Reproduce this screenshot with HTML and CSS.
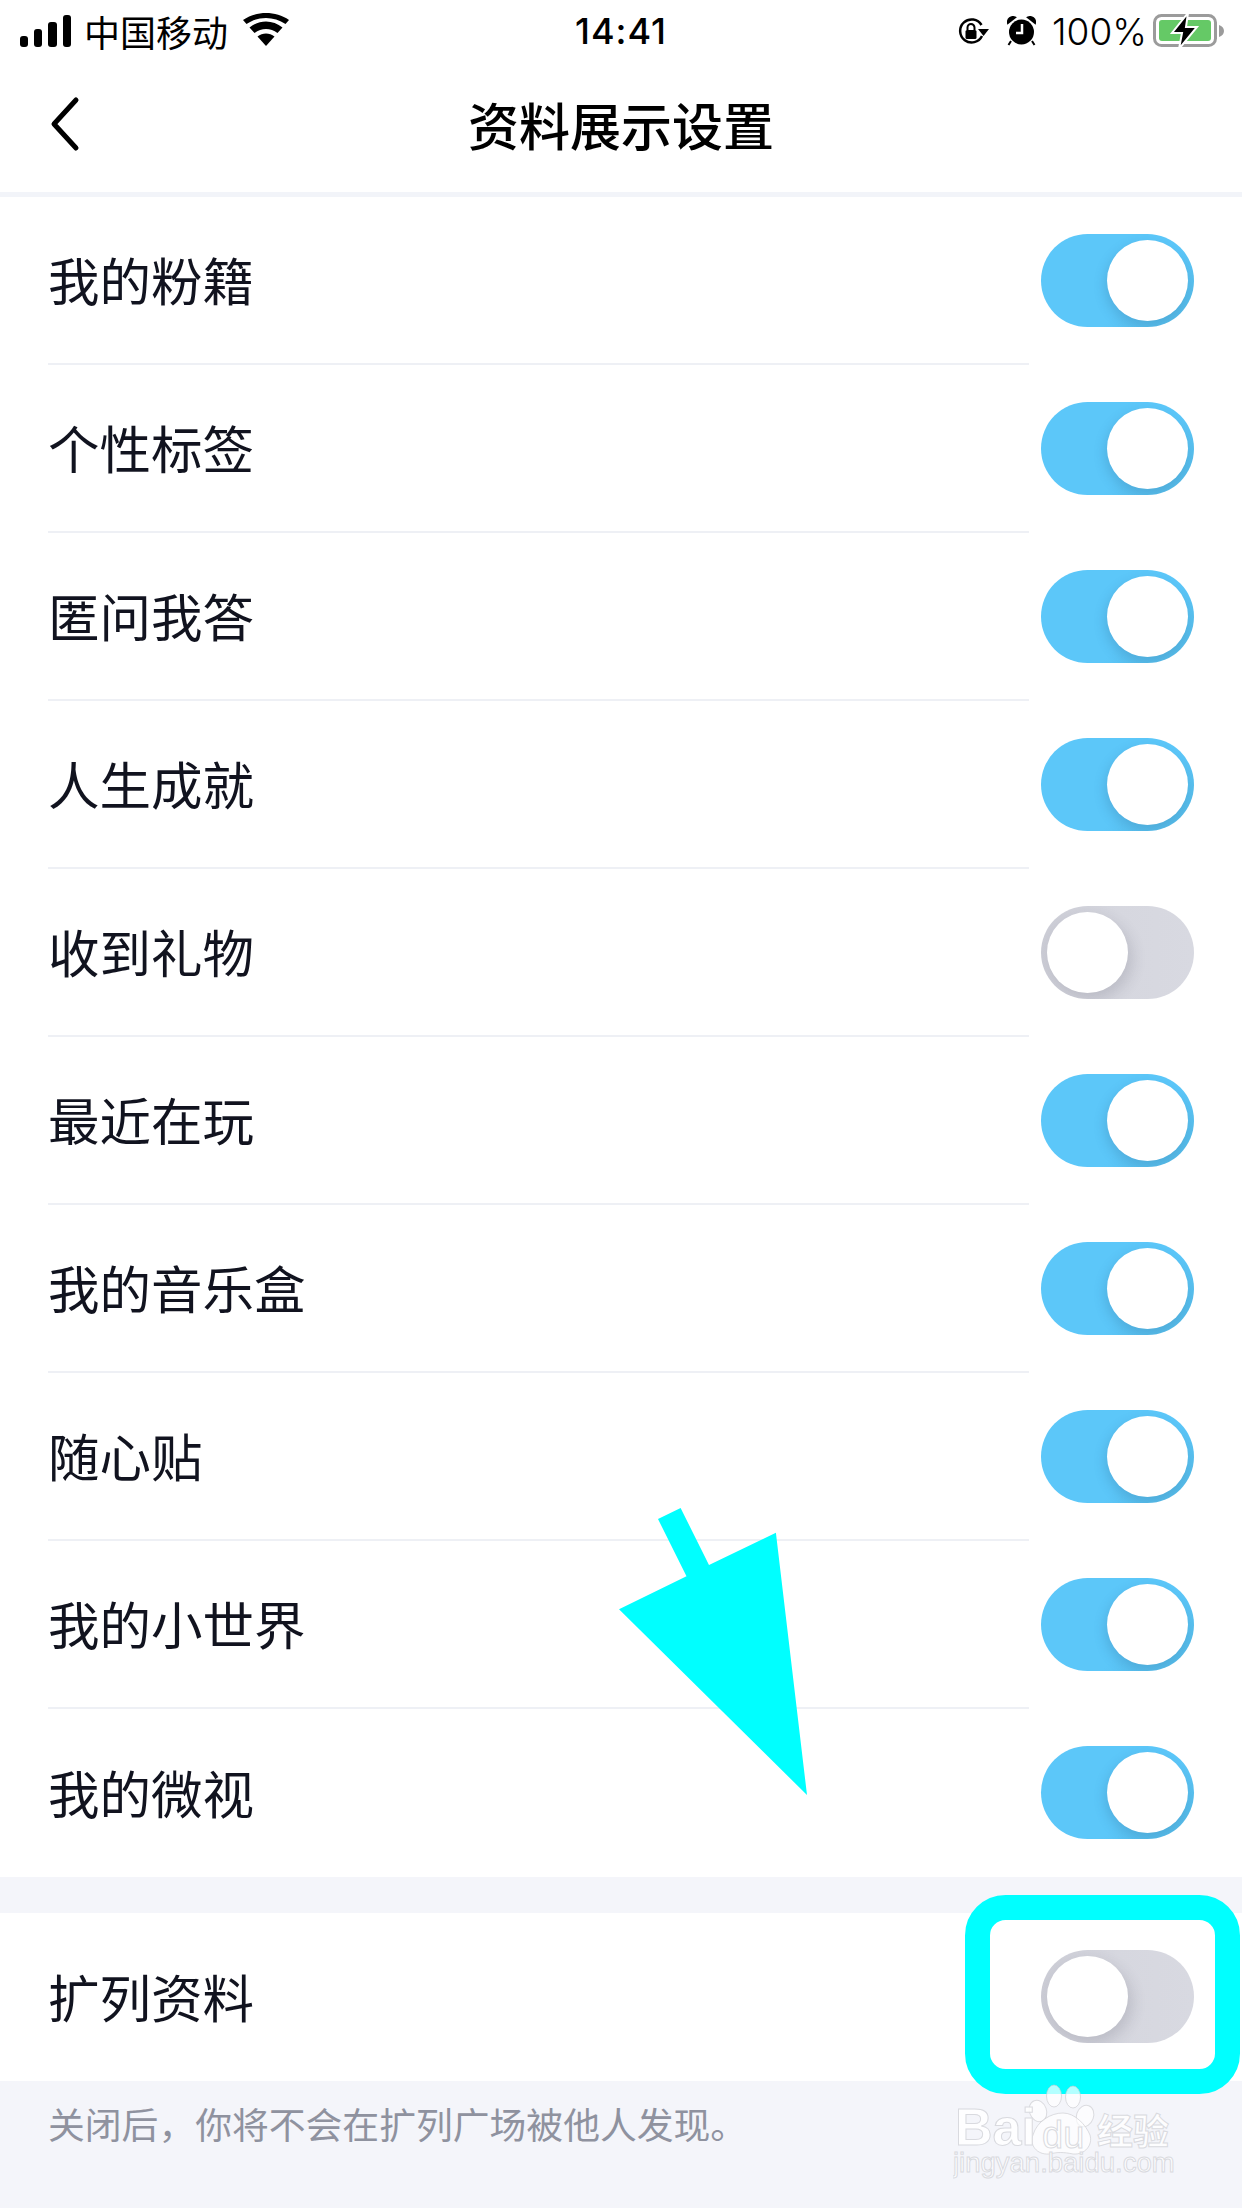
FILE: index.html
```html
<!DOCTYPE html>
<html lang="zh-CN">
<head>
<meta charset="utf-8">
<title>资料展示设置</title>
<link rel="stylesheet" href="styles.css">
</head>
<body>
<div class="page">
  <div class="status">
    <div class="status-left">
      <svg class="signal" width="51" height="32" viewBox="0 0 51 32"><rect x="0" y="21" width="8" height="11" rx="3"/><rect x="14" y="14" width="8" height="18" rx="3"/><rect x="28" y="7" width="9" height="25" rx="3"/><rect x="43" y="0" width="8" height="32" rx="3"/></svg>
      <span class="carrier">中国移动</span>
      <svg class="wifi" width="46" height="33" viewBox="0 0 46 33"><path d="M23 33 L14.5 23.5 C19.5 19.5 26.5 19.5 31.500 23.500 Z"/><path d="M11.500 20 L6.500 14.500 C16 6.500 30 6.500 39.500 14.500 L34.500 20 C27.500 14.500 18.500 14.500 11.500 20 Z"/><path d="M3.500 11 L0 7 C13 -2.300 33 -2.300 46 7 L42.500 11 C31 3 15 3 3.500 11 Z"/></svg>
    </div>
    <div class="time">14:41</div>
    <div class="status-right">
      <svg class="lock" width="32" height="27" viewBox="0 0 32 27"><path d="M25 18 A11.500 11.500 0 1 1 24.500 7" fill="none" stroke="#000" stroke-width="2.500"/><path d="M21 11 L32 11 L26.500 18 Z"/><rect x="8.500" y="12" width="11" height="9" rx="1.500"/><path d="M10.500 12 V9.500 A3.500 3.500 0 0 1 17.500 9.500 V12" fill="none" stroke="#000" stroke-width="2"/></svg>
      <svg class="alarm" width="29" height="30" viewBox="0 0 29 30"><circle cx="14.500" cy="16" r="12.500"/><path d="M1 7 A5 5 0 0 1 8 1.500 Z M28 7 A5 5 0 0 0 21 1.500 Z M4 25 L1.500 29 M25 25 L27.500 29" stroke="#000" stroke-width="2"/><path d="M15 8 V17 H9" fill="none" stroke="#fff" stroke-width="2.500"/></svg>
      <span class="percent">100%</span>
      <svg class="battery" width="73" height="36" viewBox="0 0 73 36"><rect x="1.500" y="2.500" width="61" height="30" rx="7" fill="none" stroke="#9b9b9b" stroke-width="3"/><rect x="6" y="7" width="52" height="21" rx="3" fill="#65c966"/><path d="M66 12 C69 13 71 15 71 18 C71 21 69 23 66 24 Z" fill="#9b9b9b"/><path d="M35 0 L19 20 L29 20 L26 36 L44 14 L33 14 Z" stroke="#fff" stroke-width="2"/></svg>
    </div>
  </div>

  <header class="nav">
    <svg class="back" width="30" height="56" viewBox="0 0 30 56"><path d="M26 4 L4 28 L26 52" fill="none" stroke="#000" stroke-width="5" stroke-linecap="round" stroke-linejoin="round"/></svg>
    <h1 class="title">资料展示设置</h1>
  </header>

  <section class="list">
    <div class="row"><div class="label">我的粉籍</div><div class="toggle on"><i class="knob"></i></div></div>
    <div class="row"><div class="label">个性标签</div><div class="toggle on"><i class="knob"></i></div></div>
    <div class="row"><div class="label">匿问我答</div><div class="toggle on"><i class="knob"></i></div></div>
    <div class="row"><div class="label">人生成就</div><div class="toggle on"><i class="knob"></i></div></div>
    <div class="row"><div class="label">收到礼物</div><div class="toggle off"><i class="knob"></i></div></div>
    <div class="row"><div class="label">最近在玩</div><div class="toggle on"><i class="knob"></i></div></div>
    <div class="row"><div class="label">我的音乐盒</div><div class="toggle on"><i class="knob"></i></div></div>
    <div class="row"><div class="label">随心贴</div><div class="toggle on"><i class="knob"></i></div></div>
    <div class="row"><div class="label">我的小世界</div><div class="toggle on"><i class="knob"></i></div></div>
    <div class="row"><div class="label last">我的微视</div><div class="toggle on"><i class="knob"></i></div></div>
  </section>

  <section class="list second">
    <div class="row"><div class="label last">扩列资料</div><div class="toggle off"><i class="knob"></i></div></div>
  </section>
  <p class="note">关闭后，你将不会在扩列广场被他人发现。</p>

  <svg class="annotation" width="1242" height="2208" viewBox="0 0 1242 2208">
    <polygon points="680.600,1508 658,1519 686.500,1576.300 619,1609.300 807,1795 775.900,1532.700 709,1565" fill="#00ffff"/>
    <rect x="977.500" y="1907.500" width="250" height="174" rx="28" fill="none" stroke="#00ffff" stroke-width="25"/>
  </svg>

  <svg class="watermark" width="232" height="110" viewBox="0 0 232 110">
    <g class="paw">
      <ellipse cx="101" cy="13" rx="7.500" ry="11"/>
      <ellipse cx="120" cy="14" rx="7.500" ry="11"/>
      <ellipse cx="85" cy="28" rx="8.500" ry="11" transform="rotate(-20 85 28)"/>
      <ellipse cx="132" cy="33" rx="8.500" ry="11" transform="rotate(20 132 33)"/>
      <path d="M80 52 C84 38 98 30 110 30 C122 30 133 42 137 52 C140 62 132 72 120 71 C110 69 105 69 96 71 C84 72 76 62 80 52 Z"/>
    </g>
    <text class="wm-bai" x="2" y="62">Bai</text>
    <text class="wm-du" x="89" y="65">du</text>
    <text class="wm-cn" x="144" y="62">经验</text>
    <text class="wm-url" x="0" y="89">jingyan.baidu.com</text>
  </svg>
</div>
</body>
</html>
```
FILE: styles.css
```css
* { box-sizing: border-box; }
html, body { margin: 0; padding: 0; }
body {
  width: 1242px;
  height: 2208px;
  overflow: hidden;
  background: #f4f5fa;
  font-family: "Noto Sans CJK SC", "Noto Sans", sans-serif;
  color: #11131f;
}
.page { position: relative; width: 1242px; height: 2208px; }

.status {
  height: 62px;
  background: #fff;
  display: grid;
  grid-template-columns: 1fr auto 1fr;
  align-items: center;
  color: #000;
}
.status-left { display: flex; align-items: center; padding-left: 20px; }
.status-right { display: flex; align-items: center; justify-content: flex-end; padding-right: 16px; }
.signal { margin-right: 13px; }
.carrier { font-size: 36px; line-height: 44px; }
.wifi { margin-left: 15px; margin-bottom: 3px; }
.time { font-family: Inter, Roboto, sans-serif; font-size: 36px; font-weight: 500; letter-spacing: 1px; }
.lock { margin-right: 18px; }
.alarm { margin-right: 16px; }
.percent { font-family: Inter, Roboto, sans-serif; font-size: 37px; font-weight: 300; margin-right: 6px; }

.nav {
  height: 135px;
  background: #fff;
  border-bottom: 5px solid #f2f4f9;
  display: grid;
  grid-template-columns: 1fr auto 1fr;
  align-items: center;
  padding: 0 0 7px 50px;
}
.title {
  margin: 0;
  font-size: 51px;
  font-weight: 500;
  line-height: 60px;
  color: #000;
  grid-column: 2;
  transform: translateX(-25px);
}
.back { grid-column: 1; grid-row: 1; }

.list { background: #fff; }
.second { margin-top: 36px; }
.row { display: flex; align-items: center; padding: 0 48px; height: 168px; }
.label {
  flex: 0 0 981px;
  height: 168px;
  display: flex;
  align-items: center;
  padding-bottom: 3px;
  font-size: 51.500px;
  line-height: 60px;
  border-bottom: 2px solid #eef0f5;
}
.label.last { border-bottom: 0; }

.toggle {
  flex: 0 0 153px;
  margin: 0 0 1px 12px;
  height: 93px;
  border-radius: 47px;
  overflow: hidden;
  display: flex;
  align-items: center;
  padding: 0 6px;
}
.toggle.on {
  justify-content: flex-end;
  background: linear-gradient(135deg, #5cc7f9 62%, #54b8e4 100%);
}
.toggle.off {
  justify-content: flex-start;
  background: linear-gradient(90deg, #cbccd5 0%, #d6d7df 50%, #d8d9e1 100%);
}
.knob {
  display: block;
  width: 81px;
  height: 81px;
  border-radius: 50%;
  background: #fff;
}
.toggle.on .knob { box-shadow: -2px 5px 12px rgba(40, 90, 130, .22); }
.toggle.off .knob { box-shadow: 5px 6px 14px rgba(60, 60, 80, .16); }

.note {
  margin: 0;
  padding: 19px 48px 0;
  font-size: 36.800px;
  line-height: 46px;
  color: #8f929f;
}

.annotation { position: absolute; left: 0; top: 0; }
.watermark { position: absolute; left: 953px; top: 2083px; }
.paw ellipse, .paw path { fill: rgba(255, 255, 255, .7); stroke: rgba(200, 200, 205, .6); stroke-width: 1; }
.watermark text {
  fill: rgba(255, 255, 255, .85);
  stroke: #d9dadf;
  stroke-width: 1;
}
.wm-bai { font-family: "Liberation Sans", sans-serif; font-size: 52px; font-weight: 700; }
.wm-du { font-family: "Liberation Sans", sans-serif; font-size: 38px; }
.wm-cn { font-family: "Noto Sans CJK SC", sans-serif; font-size: 36px; font-weight: 700; }
.wm-url { font-family: "Liberation Sans", sans-serif; font-size: 27.500px; }
```
